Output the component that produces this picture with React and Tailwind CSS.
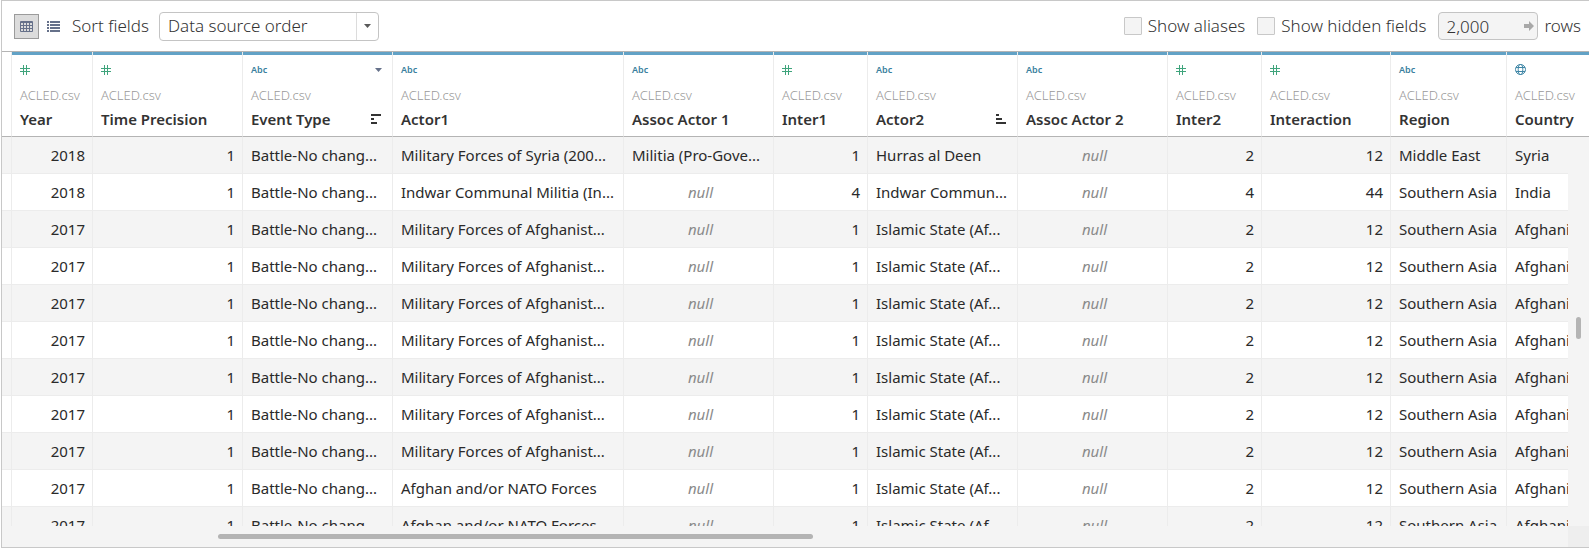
import React from "react";

const columns = [
  { name: "Year", icon: "number", width: "w-[81px]", align: "right" },
  { name: "Time Precision", icon: "number", width: "w-[150px]", align: "right" },
  { name: "Event Type", icon: "text", width: "w-[150px]", sort: "desc", menu: true },
  { name: "Actor1", icon: "text", width: "w-[231px]" },
  { name: "Assoc Actor 1", icon: "text", width: "w-[150px]" },
  { name: "Inter1", icon: "number", width: "w-[94px]", align: "right" },
  { name: "Actor2", icon: "text", width: "w-[150px]", sort: "asc" },
  { name: "Assoc Actor 2", icon: "text", width: "w-[150px]" },
  { name: "Inter2", icon: "number", width: "w-[94px]", align: "right" },
  { name: "Interaction", icon: "number", width: "w-[129px]", align: "right" },
  { name: "Region", icon: "text", width: "w-[116px]" },
  { name: "Country", icon: "globe", width: "w-[150px]" },
];

const afghan = ["2017", "1", "Battle-No chang...", "Military Forces of Afghanist...", null, "1", "Islamic State (Af...", null, "2", "12", "Southern Asia", "Afghanistan"];
const nato = ["2017", "1", "Battle-No chang...", "Afghan and/or NATO Forces", null, "1", "Islamic State (Af...", null, "2", "12", "Southern Asia", "Afghanistan"];

const rows = [
  ["2018", "1", "Battle-No chang...", "Military Forces of Syria (200...", "Militia (Pro-Gove...", "1", "Hurras al Deen", null, "2", "12", "Middle East", "Syria"],
  ["2018", "1", "Battle-No chang...", "Indwar Communal Militia (In...", null, "4", "Indwar Commun...", null, "4", "44", "Southern Asia", "India"],
  afghan,
  afghan,
  afghan,
  afghan,
  afghan,
  afghan,
  afghan,
  nato,
  nato,
];

const TypeIcon = ({ type }) => {
  if (type === "text") {
    return <span className="text-[9px] leading-[10px] font-semibold text-[#3a7f9e]">Abc</span>;
  }
  if (type === "globe") {
    return (
      <svg className="w-[11px] h-[11px]" viewBox="0 0 11 11" fill="none" stroke="#3f86a6">
        <circle cx="5.5" cy="5.5" r="5" />
        <ellipse cx="5.5" cy="5.5" rx="2.3" ry="5" />
        <path d="M1 3.5h9M1 7.5h9" />
      </svg>
    );
  }
  return (
    <svg className="w-[10px] h-[10px]" viewBox="0 0 10 10" fill="none" stroke="#3fa47c">
      <path d="M3.5 0v10M6.5 0v10M0 3.5h10M0 6.5h10" />
    </svg>
  );
};

const SortIcon = ({ direction }) => (
  <svg className="w-[10px] h-[10px] mr-[3px]" viewBox="0 0 10 10" fill="#333">
    {direction === "desc" ? (
      <path d="M0 0h10v2H0zM0 4h3v2H0zM0 8h6v2H0z" />
    ) : (
      <path d="M0 0h3v2H0zM0 4h6v2H0zM0 8h10v2H0z" />
    )}
  </svg>
);

const Toolbar = () => (
  <div className="flex items-center shrink-0 h-[51px] border-b border-[#b4b4b4] bg-white pl-3 pr-2 text-[17px] leading-6 text-[#333]">
    <button aria-label="Grid view" className="flex items-center justify-center w-[25px] h-[25px] border border-[#9b9b9b] bg-[#dcdcdc]">
      <svg className="w-[13px] h-[11px]" viewBox="0 0 13 11" fill="none" stroke="#66718a">
        <path d="M.5 .5h12v10H.5zM0 1.5h13M0 4.5h13M0 7.5h13M3.5 1v10M6.5 1v10M9.5 1v10" />
      </svg>
    </button>
    <button aria-label="List view" className="ml-2">
      <svg className="w-[13px] h-[11px]" viewBox="0 0 13 11" fill="#66718a">
        <path d="M0 0h2v2H0zM3 0h10v2H3zM0 3h2v2H0zM3 3h10v2H3zM0 6h2v2H0zM3 6h10v2H3zM0 9h2v2H0zM3 9h10v2H3z" />
      </svg>
    </button>
    <label htmlFor="sort" className="ml-3">Sort fields</label>
    <div className="relative ml-[10px]">
      <select id="sort" className="block appearance-none w-[220px] h-[29px] border border-[#c4c4c4] rounded-sm bg-white pl-2">
        <option>Data source order</option>
      </select>
      <span className="absolute right-px top-px flex items-center justify-center w-[22px] h-[27px] border-l border-[#dcdcdc] pointer-events-none">
        <svg className="w-[7px] h-[4px]" viewBox="0 0 7 4" fill="#5a5a5a">
          <path d="M0 0h7L3.5 4z" />
        </svg>
      </span>
    </div>
    <div className="flex items-center gap-3 ml-auto">
      <label className="flex items-center gap-[6px]">
        <input type="checkbox" className="appearance-none w-[18px] h-[18px] border border-[#c8c8c8] rounded-[1px] bg-[#f4f4f4]" />
        Show aliases
      </label>
      <label className="flex items-center gap-[6px]">
        <input type="checkbox" className="appearance-none w-[18px] h-[18px] border border-[#c8c8c8] rounded-[1px] bg-[#f4f4f4]" />
        Show hidden fields
      </label>
      <div className="flex items-center gap-[6px]">
        <div className="relative">
          <input id="rows" type="text" defaultValue="2,000" className="block w-[100px] h-[28px] border border-[#c4c4c4] rounded-sm bg-[#f4f4f4] pl-[7px]" />
          <svg className="absolute right-1 top-[9px] w-[10px] h-[10px]" viewBox="0 0 10 10" fill="#a8a8a8">
            <path d="M0 3h5V0l5 5-5 5V7H0z" />
          </svg>
        </div>
        <label htmlFor="rows">rows</label>
      </div>
    </div>
  </div>
);

const HeaderCell = ({ column }) => (
  <th scope="col" className="p-0 border-r border-b border-r-[#ececec] border-b-[#b4b4b4] text-left font-light align-top">
    <div className="h-[84px] border-t-[3px] border-[#62a2c6] px-2 pt-[9px]">
      <div className="flex items-center justify-between h-[11px]">
        <TypeIcon type={column.icon} />
        {column.menu && (
          <button aria-label="Column menu" className="mr-[2px]">
            <svg className="w-[7px] h-[4px]" viewBox="0 0 7 4" fill="#66718a">
              <path d="M0 0h7L3.5 4z" />
            </svg>
          </button>
        )}
      </div>
      <div className="mt-3 text-[13px] leading-4 text-[#999]">ACLED.csv</div>
      <div className="flex items-center justify-between mt-[6px] text-[15px] leading-5 font-semibold text-[#333] whitespace-nowrap">
        {column.name}
        {column.sort && <SortIcon direction={column.sort} />}
      </div>
    </div>
  </th>
);

const DataCell = ({ value, align }) => {
  if (value === null) {
    return <td className="pl-1 pr-0 py-0 border-r border-b border-[#ececec] text-center italic text-[#8a8a8a]">null</td>;
  }
  return (
    <td className={`pl-2 pr-[7px] py-0 border-r border-b border-[#ececec] whitespace-nowrap overflow-hidden ${align === "right" ? "text-right" : "text-left"}`}>
      {value}
    </td>
  );
};

const DataGrid = () => (
  <div className="relative flex-1 min-h-0 overflow-hidden">
    <table className="table-fixed w-[1655px] border-separate border-spacing-0">
      <colgroup>
        <col className="w-[10px]" />
        {columns.map((column) => (
          <col key={column.name} className={column.width} />
        ))}
      </colgroup>
      <thead>
        <tr>
          <td className="p-0 border-r border-b border-r-[#ececec] border-b-[#b4b4b4]" />
          {columns.map((column) => (
            <HeaderCell key={column.name} column={column} />
          ))}
        </tr>
      </thead>
      <tbody className="text-[15px] leading-5 font-normal text-[#2a2a2a]">
        {rows.map((row, i) => (
          <tr key={i} className="h-[37px] odd:bg-[#f4f4f4] even:bg-white">
            <td className="p-0 border-r border-b border-[#ececec]" />
            {row.map((value, j) => (
              <DataCell key={j} value={value} align={columns[j].align} />
            ))}
          </tr>
        ))}
      </tbody>
    </table>

    {/* Scrollbars float over the grid */}
    <div className="absolute right-0 top-[85px] bottom-0 w-[21px] bg-[#f4f4f4]">
      <div className="w-[5px] h-[22px] mt-[180px] ml-2 rounded-sm bg-[#b4b4b4]" />
    </div>
    <div className="absolute inset-x-0 bottom-0 flex h-[21px] bg-[#f4f4f4]">
      <div className="flex-1 pt-2">
        <div className="w-[38%] h-[5px] ml-[216px] rounded-sm bg-[#b4b4b4]" />
      </div>
      <div className="w-[21px] bg-[#eee]" />
    </div>
  </div>
);

const App = () => (
  <div className="flex h-screen bg-white pl-px font-['Noto_Sans',sans-serif] font-light">
    <div className="flex flex-col flex-1 min-w-0 border-t border-l border-b border-[#c8c8c8] bg-white">
      <Toolbar />
      <DataGrid />
    </div>
  </div>
);

export default App;
